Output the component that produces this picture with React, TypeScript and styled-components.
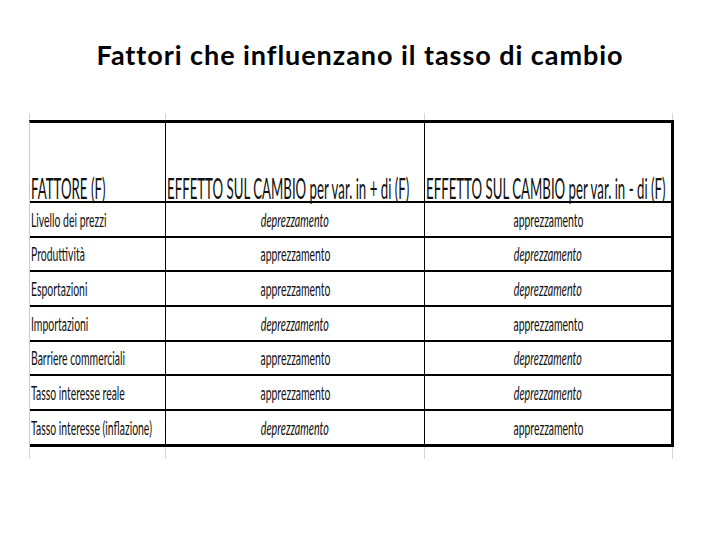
import React from "react";
import styled, { createGlobalStyle } from "styled-components";

const Global = createGlobalStyle`
  html, body { margin: 0; padding: 0; background: #ffffff; }
  body { width: 720px; height: 540px; overflow: hidden; }
`;

const Page = styled.div`
  width: 720px;
  height: 540px;
  background: #fff;
  padding-top: 39px;
  box-sizing: border-box;
  display: flex;
  flex-direction: column;
  align-items: flex-start;
`;

const Title = styled.h1`
  align-self: stretch;
  margin: 0;
  text-align: center;
  font-family: Lato, "Open Sans", sans-serif;
  font-weight: 700;
  font-size: 27px;
  letter-spacing: 0.95px;
  line-height: 31px;
  color: #000;
`;

const Sheet = styled.div`
  margin-top: 43px;
  margin-left: 29px;
  width: 645px;
  display: flex;
  flex-direction: column;
`;

const Stub = styled.div<{ $h: number }>`
  height: ${(p) => p.$h}px;
  display: grid;
  grid-template-columns: 136px 259px 250px;
`;

const StubCell = styled.div<{ $last?: boolean }>`
  border-left: 1px solid #d2d7df;
  ${(p) => (p.$last ? "border-right: 1px solid #d2d7df; margin-right: 1px;" : "")}
`;

const Table = styled.div`
  border-top: 3px solid #000;
  border-right: 3px solid #000;
  border-left: 1px solid #c5ccd8;
  display: flex;
  flex-direction: column;
`;

const Row = styled.div<{ $h: number; $bw: number }>`
  height: ${(p) => p.$h}px;
  box-sizing: border-box;
  border-bottom: ${(p) => p.$bw}px solid #000;
  display: grid;
  grid-template-columns: 135px 259px 247px;
`;

const Cell = styled.div<{ $sep?: boolean; $center?: boolean; $pb: number }>`
  box-sizing: border-box;
  ${(p) => (p.$sep ? "border-left: 1px solid #000;" : "")}
  display: flex;
  align-items: flex-end;
  justify-content: ${(p) => (p.$center ? "center" : "flex-start")};
  padding: 0 0 ${(p) => p.$pb}px ${(p) => (p.$center ? 0 : 1)}px;
  overflow: visible;
  white-space: nowrap;
`;

const HeadText = styled.span`
  display: inline-block;
  font-family: Lato, "Open Sans", sans-serif;
  font-size: 28px;
  line-height: 25px;
  color: #111;
  transform: scaleX(0.473);
  transform-origin: left bottom;
`;

const LabelText = styled.span`
  display: inline-block;
  font-family: Lato, "Open Sans", sans-serif;
  font-size: 19.5px;
  line-height: 23px;
  color: #111;
  transform: scaleX(0.535);
  transform-origin: left bottom;
`;

const ValueText = styled.span<{ $italic: boolean }>`
  display: inline-block;
  font-family: Lato, "Open Sans", sans-serif;
  font-size: 19.5px;
  line-height: 23px;
  color: #111;
  font-style: ${(p) => (p.$italic ? "italic" : "normal")};
  transform: scaleX(${(p) => (p.$italic ? 0.55 : 0.535)});
  transform-origin: center bottom;
`;

type Val = "a" | "d";

const rows: { label: string; plus: Val; minus: Val }[] = [
  { label: "Livello dei prezzi", plus: "d", minus: "a" },
  { label: "Produttività", plus: "a", minus: "d" },
  { label: "Esportazioni", plus: "a", minus: "d" },
  { label: "Importazioni", plus: "d", minus: "a" },
  { label: "Barriere commerciali", plus: "a", minus: "d" },
  { label: "Tasso interesse reale", plus: "a", minus: "d" },
  { label: "Tasso interesse (inflazione)", plus: "d", minus: "a" },
];

const Value: React.FC<{ v: Val }> = ({ v }) => (
  <ValueText $italic={v === "d"}>{v === "d" ? "deprezzamento" : "apprezzamento"}</ValueText>
);

const Stubs: React.FC<{ h: number }> = ({ h }) => (
  <Stub $h={h}>
    <StubCell />
    <StubCell />
    <StubCell $last />
  </Stub>
);

export default function App() {
  return (
    <>
      <Global />
      <Page>
        <Title>Fattori che influenzano il tasso di cambio</Title>
        <Sheet>
          <Stubs h={7} />
          <Table>
            <Row $h={80} $bw={2}>
              <Cell $pb={0}>
                <HeadText>FATTORE (F)</HeadText>
              </Cell>
              <Cell $sep $pb={0}>
                <HeadText>EFFETTO SUL CAMBIO per var. in + di (F)</HeadText>
              </Cell>
              <Cell $sep $pb={0}>
                <HeadText>EFFETTO SUL CAMBIO per var. in - di (F)</HeadText>
              </Cell>
            </Row>
            {rows.map((r, i) => (
              <Row key={r.label} $h={i === rows.length - 1 ? 35.7 : 34.7} $bw={i === rows.length - 1 ? 3 : 2}>
                <Cell $pb={5}>
                  <LabelText>{r.label}</LabelText>
                </Cell>
                <Cell $sep $center $pb={5}>
                  <Value v={r.plus} />
                </Cell>
                <Cell $sep $center $pb={5}>
                  <Value v={r.minus} />
                </Cell>
              </Row>
            ))}
          </Table>
          <Stubs h={12} />
        </Sheet>
      </Page>
    </>
  );
}
